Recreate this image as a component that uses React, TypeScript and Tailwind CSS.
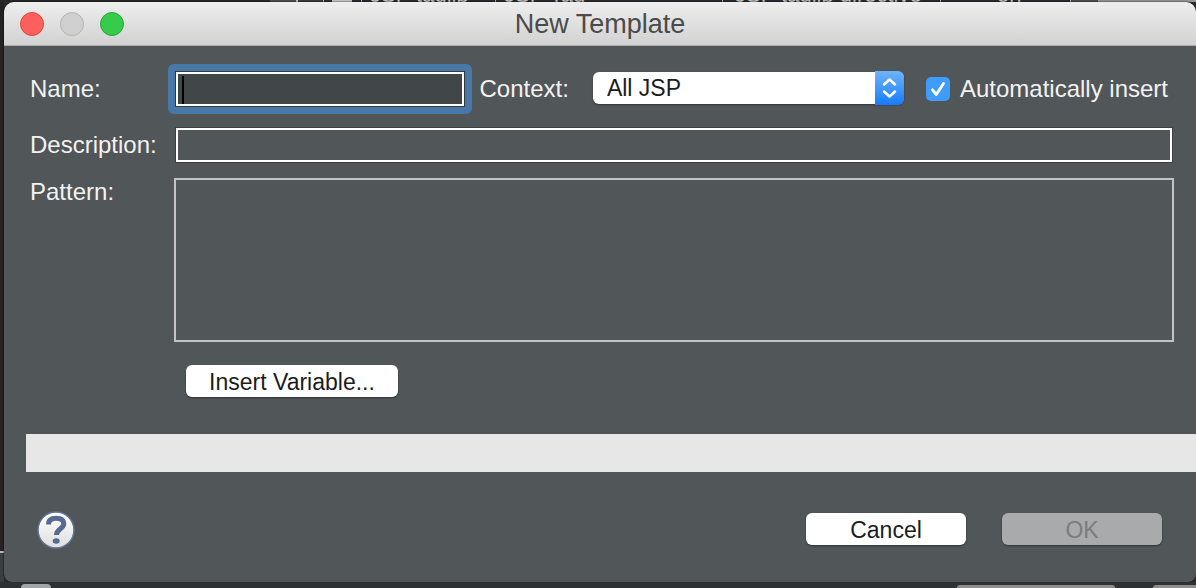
import { useState } from "react";

const ui = "font-['Liberation_Sans',Arial,sans-serif]";

function BackgroundTable() {
  return (
    <div
      aria-hidden="true"
      className="flex h-[2px] items-end overflow-hidden bg-[#2b2e30] text-[22px] leading-[15px] whitespace-nowrap text-[#c9c9c9]"
    >
      <div className="h-[2px] w-[270px] shrink-0 bg-[#292827]" />
      <div className="h-[2px] w-[26px] shrink-0 bg-[#4c514f]" />
      <div className="h-[2px] w-[27px] shrink-0 border-l-2 border-[#d0d0d0] bg-[#3a3f3f]" />
      <div className="h-[2px] w-[38px] shrink-0 border-l border-[#b0b0b0] pl-2">
        <div className="h-[2px] w-5 bg-[#c9c9c9]" />
      </div>
      <div className="w-[134px] shrink-0 border-l border-[#b0b0b0] pl-2">JSP taglib</div>
      <div className="w-[227px] shrink-0 border-l border-[#b0b0b0] pl-2">JSP Tag</div>
      <div className="w-[218px] shrink-0 border-l border-[#b0b0b0] pl-3">JSP taglib directive</div>
      <div className="w-[130px] shrink-0 border-l border-[#b0b0b0] pl-14">on</div>
      <div className="h-[2px] w-[28px] shrink-0 border-l border-[#b0b0b0] bg-[#4c514f]" />
      <div className="h-[2px] flex-1 bg-[#969896]" />
    </div>
  );
}

function TitleBar() {
  return (
    <header className="flex h-[44px] items-center rounded-t-[10px] border-b border-[#ababab] bg-linear-to-b from-[#eeeeee] to-[#d2d2d2] px-4">
      <div className="flex flex-1 gap-4">
        <button aria-label="Close" className="size-6 rounded-full border border-[#e0443f] bg-[#fd605c]" />
        <button aria-label="Minimize" disabled className="size-6 rounded-full border border-[#b4b4b4] bg-[#d0d0d0]" />
        <button aria-label="Zoom" className="size-6 rounded-full border border-[#23a834] bg-[#36cb4b]" />
      </div>
      <h1 className="text-[27px] leading-8 text-[#4b4b4b]">New Template</h1>
      <div className="flex-1" />
    </header>
  );
}

function PushButton({ children, className, disabled }: { children: string; className: string; disabled?: boolean }) {
  const tone = disabled ? "bg-[#a8aaab] text-[#7b7d7e]" : "bg-white text-[#1c1c1c]";
  return (
    <button
      type="button"
      disabled={disabled}
      className={`h-8 rounded-[6px] pt-[2px] text-[23px] leading-[30px] shadow-[0_1px_2px_#00000066] ${tone} ${className}`}
    >
      {children}
    </button>
  );
}

function HelpIcon() {
  return (
    <svg viewBox="0 0 38 38" className="size-[38px]" aria-hidden="true">
      <defs>
        <linearGradient id="help-face" x1="0" y1="0" x2="0" y2="1">
          <stop offset="0" stopColor="#ffffff" />
          <stop offset="1" stopColor="#dedede" />
        </linearGradient>
      </defs>
      <circle cx="19" cy="19" r="18" fill="url(#help-face)" stroke="#5f7396" strokeWidth="1.5" />
      <path
        d="M11.500 13.500C11.500 9 14.500 7.200 19 7.200c5 0 7.800 2 7.800 5.600 0 5-7.300 5-7.300 11.200"
        fill="none"
        stroke="#566b8f"
        strokeWidth="5"
      />
      <ellipse cx="19.200" cy="30" rx="3.500" ry="2.700" fill="#566b8f" />
    </svg>
  );
}

export default function App() {
  const [name, setName] = useState("");
  const [autoInsert, setAutoInsert] = useState(true);

  return (
    <div className={`flex min-h-screen flex-col bg-[#2b2e30] ${ui}`}>
      <BackgroundTable />
      <div className="flex flex-1">
        <div className="flex w-1 shrink-0 flex-col bg-[#242321]">
          <div className="flex-1" />
          <div className="h-[2px] bg-[#b9b9b9]" />
          <div className="h-[29px] bg-[#3a3f42]" />
        </div>
        <main className="flex min-w-0 flex-1 flex-col rounded-t-[10px] rounded-b-[8px] bg-[#515658] text-[24px] leading-7 text-[#f2f2f2] shadow-[0_0_2px_#000000]">
          <TitleBar />
          <form className="flex flex-1 flex-col" onSubmit={(e) => e.preventDefault()}>
            <div className="flex items-center pt-[18px] pr-7 pl-[26px]">
              <label htmlFor="name" className="w-[138px] shrink-0">Name:</label>
              <div className="relative min-w-0 flex-1 rounded-[6px] bg-[#4878a8] p-2">
                <input
                  id="name"
                  type="text"
                  value={name}
                  onChange={(e) => setName(e.target.value)}
                  className="block h-[34px] w-full border-2 border-white bg-[#414649] px-1 caret-black shadow-[0_0_0_1px_#36393b] outline-none"
                />
                {name === "" && <span className="pointer-events-none absolute top-3 left-[14px] h-7 w-[2px] bg-black" />}
              </div>
              <label htmlFor="context" className="ml-2 shrink-0">Context:</label>
              <div className="relative ml-6 w-[311px] shrink-0 pb-[2px]">
                <select
                  id="context"
                  className="block h-8 w-full appearance-none rounded-[6px] bg-white pl-[14px] text-[23px] leading-8 text-[#1c1c1c] shadow-[0_1px_2px_#00000066]"
                >
                  <option>All JSP</option>
                </select>
                <svg viewBox="0 0 29 34" className="pointer-events-none absolute -top-px right-0 h-[34px] w-[29px]" aria-hidden="true">
                  <defs>
                    <linearGradient id="stepper" x1="0" y1="0" x2="0" y2="1">
                      <stop offset="0" stopColor="#6fb4f8" />
                      <stop offset="1" stopColor="#157bff" />
                    </linearGradient>
                  </defs>
                  <path d="M0 0H23a6 6 0 0 1 6 6V28a6 6 0 0 1-6 6H0Z" fill="url(#stepper)" />
                  <path
                    d="M9 13.500 14.500 8.500 20 13.500M9 20.500 14.500 25.500 20 20.500"
                    fill="none"
                    stroke="white"
                    strokeWidth="2.500"
                    strokeLinecap="round"
                    strokeLinejoin="round"
                  />
                </svg>
              </div>
              <label className="ml-[22px] flex shrink-0 items-center gap-[10px]">
                <span className="relative block size-6">
                  <input
                    type="checkbox"
                    checked={autoInsert}
                    onChange={(e) => setAutoInsert(e.target.checked)}
                    className="block size-6 appearance-none rounded-[5px] bg-white checked:bg-[#409cfb]"
                  />
                  {autoInsert && (
                    <svg viewBox="0 0 24 24" className="pointer-events-none absolute inset-0 size-6" aria-hidden="true">
                      <path
                        d="M6.500 12.800 10.300 17.500 17.500 6.500"
                        fill="none"
                        stroke="white"
                        strokeWidth="2.800"
                        strokeLinecap="round"
                        strokeLinejoin="round"
                      />
                    </svg>
                  )}
                </span>
                Automatically insert
              </label>
            </div>

            <div className="mt-[14px] flex items-center pr-6 pl-[26px]">
              <label htmlFor="description" className="w-[146px] shrink-0">Description:</label>
              <input
                id="description"
                type="text"
                className="h-[34px] min-w-0 flex-1 border-2 border-white bg-transparent px-1 shadow-[0_0_0_1px_#3c4042] outline-none"
              />
            </div>

            <div className="mt-4 flex items-start pr-[22px] pl-[26px]">
              <label htmlFor="pattern" className="w-[144px] shrink-0">Pattern:</label>
              <textarea
                id="pattern"
                className="h-[164px] min-w-0 flex-1 resize-none border-2 border-[#c4c4c4] bg-transparent p-1 outline-none"
              />
            </div>

            <div className="mt-[23px] pl-[182px]">
              <PushButton className="block w-[212px]">Insert Variable...</PushButton>
            </div>

            <div role="status" className="mt-[37px] ml-[22px] h-[38px] bg-[#e7e7e7]" />

            <footer className="mt-auto flex items-start pt-[38px] pr-[34px] pb-[33px] pl-[33px]">
              <button type="button" aria-label="Help" className="mr-auto">
                <HelpIcon />
              </button>
              <PushButton className="mt-[2px] w-40">Cancel</PushButton>
              <PushButton className="mt-[2px] ml-9 w-40" disabled>OK</PushButton>
            </footer>
          </form>
        </main>
      </div>
      <div aria-hidden="true" className="flex h-[6px] items-end overflow-hidden bg-[#2d3132]">
        <div className="ml-[21px] h-1 w-[30px] rounded-t-full bg-[#a2a4a6]" />
        <div className="mr-[38px] ml-auto h-[3px] w-[158px] rounded-t-[4px] bg-[#8f8d8c]" />
        <div className="h-[3px] w-[43px] rounded-tl-[4px] bg-[#8f8d8c]" />
      </div>
    </div>
  );
}
